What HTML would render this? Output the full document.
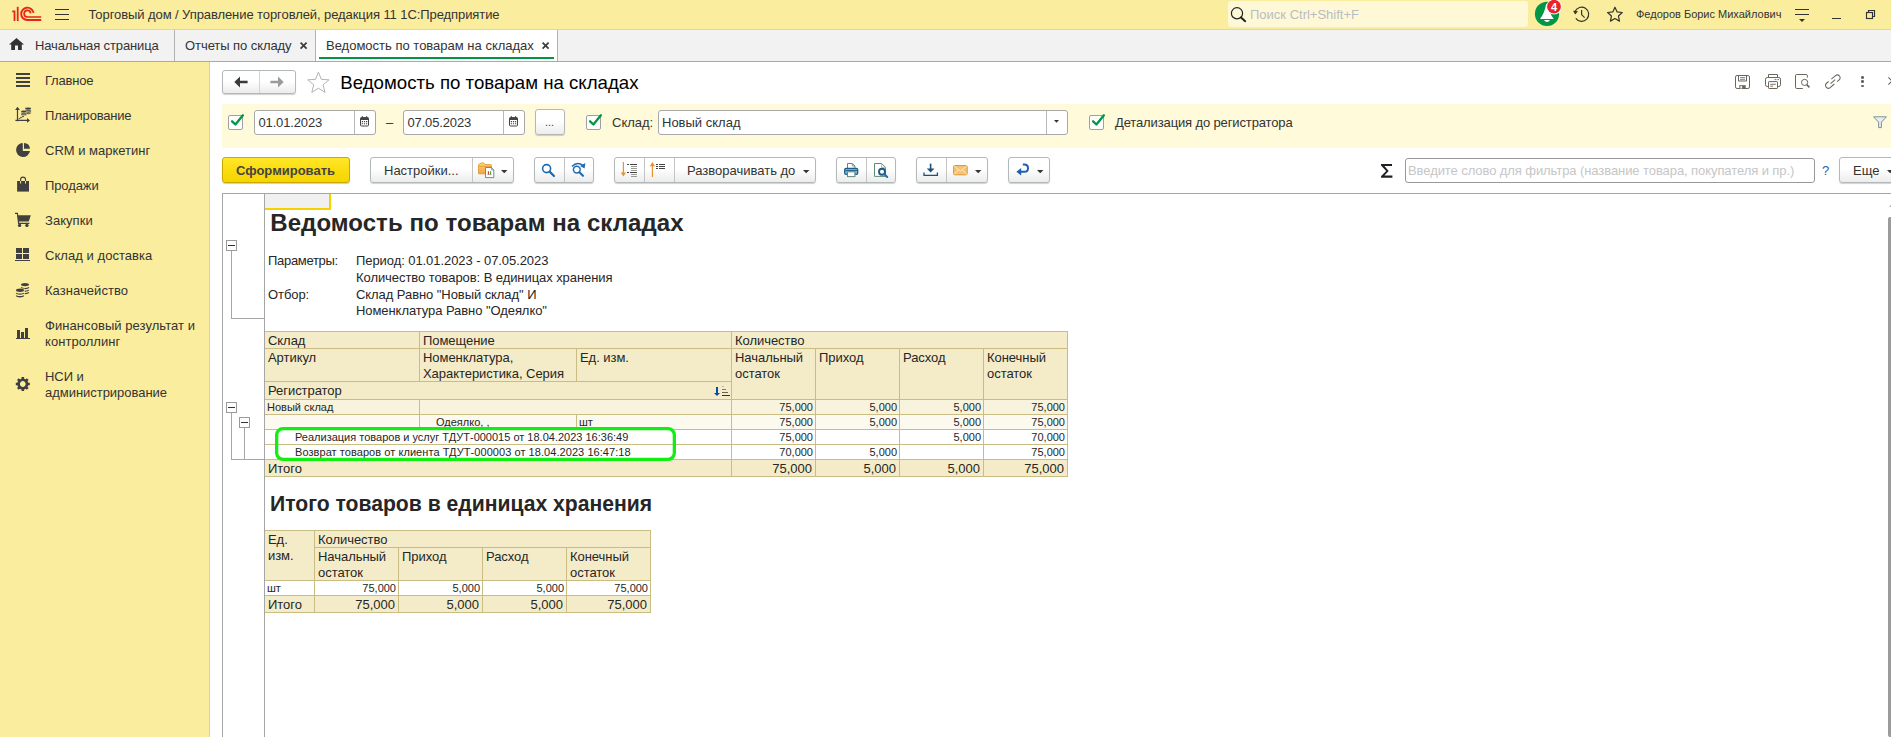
<!DOCTYPE html>
<html lang="ru">
<head>
<meta charset="utf-8">
<title>Ведомость по товарам на складах</title>
<style>
*{box-sizing:border-box;margin:0;padding:0}
html,body{width:1891px;height:737px;overflow:hidden;background:#fff}
body{font-family:"Liberation Sans",sans-serif;font-size:13px;color:#333;position:relative}
.abs{position:absolute}
.t{position:absolute;white-space:nowrap;line-height:1}
#topbar{left:0;top:0;width:1891px;height:30px;background:#fbed9e;border-bottom:1px solid #e6d88a}
#tabbar{left:0;top:30px;width:1891px;height:32px;background:#f2f2f2;border-bottom:1px solid #a9a9a9}
#sidebar{left:0;top:62px;width:210px;height:675px;background:#fbed9e;border-right:1px solid #ddd193}
.tabsep{position:absolute;top:30px;width:1px;height:31px;background:#b2b2b2}
.side{position:absolute;left:45px;font-size:13px;color:#333;line-height:16px;white-space:nowrap;letter-spacing:-0.15px}
.btn{position:absolute;border:1px solid #b3b9b9;border-radius:3px;background:linear-gradient(#ffffff 0%,#ffffff 45%,#ececec 100%);box-shadow:0 1px 1px rgba(0,0,0,.18)}
.inp{position:absolute;border:1px solid #a8a8a8;border-radius:3px;background:#fff}
.cb{position:absolute;width:15px;height:15px;border:1px solid #a0a0a0;border-radius:2px;background:#fff}
svg{position:absolute;overflow:visible}
</style>
</head>
<body>
<!-- TOP BAR -->
<div id="topbar" class="abs"></div>
<div id="tabbar" class="abs"></div>
<div id="sidebar" class="abs"></div>


<!-- 1C logo -->
<svg style="left:12px;top:6px" width="30" height="16" viewBox="0 0 30 16">
 <g fill="none" stroke="#e8231a">
  <path d="M0.2 5.4 L2.5 5.4 L2.5 15.1" stroke-width="1.8"/>
  <path d="M5.7 0.8 L5.7 15.1" stroke-width="1.8"/>
  <path d="M21.5 6.9 A6.2 6.2 0 1 0 15.3 14.05 L29.2 14.05" stroke-width="1.9"/>
  <path d="M18.7 7.3 A3.3 3.3 0 1 0 15.3 11 L29.2 11" stroke-width="1.7"/>
 </g>
</svg>
<!-- hamburger -->
<div class="abs" style="left:55px;top:9px;width:14px;height:1.4px;background:#333"></div>
<div class="abs" style="left:55px;top:14px;width:14px;height:1.4px;background:#333"></div>
<div class="abs" style="left:55px;top:19px;width:14px;height:1.4px;background:#333"></div>
<div class="t" style="left:88.5px;top:8px;font-size:13px;color:#333;letter-spacing:-0.08px">Торговый дом / Управление торговлей, редакция 11 1С:Предприятие</div>
<!-- search -->
<div class="abs" style="left:1228px;top:1px;width:300px;height:26px;background:#fef8d6;border-radius:3px"></div>
<svg style="left:1229px;top:5px" width="18" height="18" viewBox="0 0 18 18"><circle cx="8" cy="8.3" r="5.6" fill="none" stroke="#222" stroke-width="1.2"/><path d="M12 12.5 L16.2 16.2" stroke="#222" stroke-width="2" stroke-linecap="round"/></svg>
<div class="t" style="left:1250px;top:8px;font-size:13px;color:#b9bdc2">Поиск Ctrl+Shift+F</div>
<!-- bell -->
<svg style="left:1533px;top:0px" width="30" height="28" viewBox="0 0 30 28">
 <circle cx="14" cy="13.9" r="12.1" fill="#009646"/>
 <path d="M13.2 4 C12 9.5 10.6 14.6 7 18.9 L20.8 18.9 C17.2 14.6 15.8 9.5 14.6 4 Z" fill="#fff"/>
 <path d="M10.9 20.1 L17.1 20.1 Q14 23.8 10.9 20.1 Z" fill="#fff"/>
 <circle cx="21" cy="6.7" r="7.7" fill="#fff"/>
 <circle cx="21" cy="6.7" r="6.9" fill="#e8222a"/>
 <text x="21" y="11" text-anchor="middle" font-family="Liberation Sans" font-weight="bold" font-size="11" fill="#fff">4</text>
</svg>
<!-- history -->
<svg style="left:1572px;top:5px" width="20" height="20" viewBox="0 0 20 20">
 <path d="M3 6.6 A7.1 7.1 0 1 1 3.8 13.4" fill="none" stroke="#333" stroke-width="1.2"/>
 <path d="M1 5.8 L6 6.2 L3.2 9.6 Z" fill="#333"/>
 <path d="M9.6 5 L9.6 9.6 L12.6 12.6" fill="none" stroke="#333" stroke-width="1.2"/>
</svg>
<!-- star -->
<svg style="left:1606px;top:6px" width="18" height="17" viewBox="0 0 18 17">
 <path d="M8.95 1.20 L11.12 5.91 L16.27 6.52 L12.47 10.04 L13.48 15.13 L8.95 12.60 L4.42 15.13 L5.43 10.04 L1.63 6.52 L6.78 5.91 Z" fill="none" stroke="#333" stroke-width="1.2" stroke-linejoin="round"/>
</svg>
<div class="t" style="left:1636px;top:9px;font-size:11px;color:#333">Федоров Борис Михайлович</div>
<!-- menu lines -->
<div class="abs" style="left:1795px;top:8.8px;width:14px;height:1.3px;background:#333"></div>
<div class="abs" style="left:1795px;top:13.9px;width:14px;height:1.3px;background:#333"></div>
<svg style="left:1799px;top:19px" width="7" height="4" viewBox="0 0 7 4"><path d="M0 0 L6 0 L3 3 Z" fill="#333"/></svg>
<!-- minimize -->
<div class="abs" style="left:1832px;top:17.8px;width:9px;height:1.3px;background:#333"></div>
<!-- restore -->
<svg style="left:1865px;top:9px" width="11" height="11" viewBox="0 0 11 11">
 <path d="M3.5 3.5 L3.5 1.5 L9.5 1.5 L9.5 7.5 L7.5 7.5" fill="none" stroke="#333" stroke-width="1.15"/>
 <rect x="1.5" y="3.5" width="6" height="6" fill="none" stroke="#333" stroke-width="1.15"/>
</svg>

<!-- tabs -->
<div class="abs" style="left:316px;top:30px;width:241px;height:31px;background:#fff"></div>
<div class="tabsep" style="left:174px"></div>
<div class="tabsep" style="left:315px"></div>
<div class="tabsep" style="left:557px"></div>
<div class="abs" style="left:319px;top:57px;width:235px;height:2px;background:#009646"></div>
<svg style="left:9px;top:38px" width="15" height="12" viewBox="0 0 15 12"><path d="M7.5 0 L15 6.6 L12.8 6.6 L12.8 12 L9 12 L9 7.6 L6 7.6 L6 12 L2.2 12 L2.2 6.6 L0 6.6 Z" fill="#333"/></svg>
<div class="t" style="left:35px;top:39px;font-size:13px;color:#333;letter-spacing:-0.12px">Начальная страница</div>
<div class="t" style="left:185px;top:39px;font-size:13px;color:#333;letter-spacing:-0.07px">Отчеты по складу</div>
<svg style="left:300px;top:42px" width="8" height="8" viewBox="0 0 8 8"><path d="M0.6 0.6 L6.6 6.6 M6.6 0.6 L0.6 6.6" stroke="#3c3c3c" stroke-width="1.7"/></svg>
<div class="t" style="left:326px;top:39px;font-size:13px;color:#333">Ведомость по товарам на складах</div>
<svg style="left:542px;top:42px" width="8" height="8" viewBox="0 0 8 8"><path d="M0.6 0.6 L6.6 6.6 M6.6 0.6 L0.6 6.6" stroke="#3c3c3c" stroke-width="1.7"/></svg>


<!-- sidebar items -->
<div class="side" style="top:73px;letter-spacing:-0.2px">Главное</div>
<div class="side" style="top:108px;letter-spacing:-0.2px">Планирование</div>
<div class="side" style="top:143px;letter-spacing:0px">CRM и маркетинг</div>
<div class="side" style="top:178px;letter-spacing:-0.1px">Продажи</div>
<div class="side" style="top:213px;letter-spacing:0.05px">Закупки</div>
<div class="side" style="top:248px;letter-spacing:0.05px">Склад и доставка</div>
<div class="side" style="top:283px;letter-spacing:0.05px">Казначейство</div>
<div class="side" style="top:318px;letter-spacing:0.05px">Финансовый результат и<br>контроллинг</div>
<div class="side" style="top:369px;letter-spacing:-0.03px">НСИ и<br>администрирование</div>
<!-- icon: main -->
<div class="abs" style="left:16px;top:73px;width:14px;height:2px;background:#404040"></div>
<div class="abs" style="left:16px;top:77px;width:14px;height:2px;background:#404040"></div>
<div class="abs" style="left:16px;top:81px;width:14px;height:2px;background:#404040"></div>
<div class="abs" style="left:16px;top:85px;width:14px;height:2px;background:#404040"></div>
<!-- icon: planning -->
<svg style="left:14px;top:106px" width="18" height="19" viewBox="0 0 18 19">
 <path d="M3.5 2 L3.5 15.2 M1.4 14.4 L14 14.4" fill="none" stroke="#404040" stroke-width="1.2"/>
 <path d="M3.5 0.8 L1.1 3.9 L5.9 3.9 Z M16 14.4 L13 12 L13 16.8 Z" fill="#404040"/>
 <path d="M4.6 12.7 L5.8 12.7 L6.2 11.7 L7.6 11.7 L8 10.7 L10 10.5" fill="none" stroke="#404040" stroke-width="0.9"/>
 <g fill="#404040" stroke="#fbed9e" stroke-width="0.5">
 <ellipse cx="14.1" cy="7" rx="3.1" ry="1.3"/><ellipse cx="14.1" cy="5.6" rx="3.1" ry="1.3"/><ellipse cx="14.1" cy="4.2" rx="3.1" ry="1.3"/><ellipse cx="14.1" cy="2.6" rx="3.1" ry="1.4"/>
 <ellipse cx="9.8" cy="8.4" rx="2.9" ry="1.2"/><ellipse cx="9.8" cy="7" rx="2.9" ry="1.2"/><ellipse cx="9.8" cy="5.5" rx="2.9" ry="1.3"/>
 </g>
</svg>
<!-- icon: crm pie -->
<svg style="left:15px;top:142px" width="17" height="17" viewBox="0 0 17 17">
 <path d="M7.8 1 A7 7 0 1 0 15 9 L7.8 9 Z" fill="#404040"/>
 <path d="M9 1 A6.4 6.4 0 0 1 15 6.7 L9 6.7 Z" fill="#404040"/>
</svg>
<!-- icon: sales bag -->
<svg style="left:16px;top:176px" width="14" height="18" viewBox="0 0 14 18">
 <path d="M1.1 5 L13 5 L13 15.6 L1.1 15.6 Z" fill="#404040"/>
 <path d="M4.6 5 L4.6 3.6 A2.45 2.45 0 0 1 9.5 3.6 L9.5 5" fill="none" stroke="#404040" stroke-width="1.1"/>
 <path d="M4.6 5 L4.6 7.6 M9.5 5 L9.5 7.6" fill="none" stroke="#f3e598" stroke-width="1"/>
</svg>
<!-- icon: cart -->
<svg style="left:14px;top:212px" width="18" height="17" viewBox="0 0 18 17">
 <path d="M1 1.4 L3.4 1.4 L4.6 11.4 L15.4 11.4" fill="none" stroke="#404040" stroke-width="1.2"/>
 <path d="M3.6 3.2 L16.8 3.2 L14.8 9.6 L4.4 9.6 Z" fill="#404040"/>
 <circle cx="5.6" cy="13.4" r="1.7" fill="#404040"/><circle cx="12.9" cy="13.4" r="1.7" fill="#404040"/>
</svg>
<!-- icon: warehouse -->
<div class="abs" style="left:16px;top:248px;width:6px;height:5px;background:#404040"></div>
<div class="abs" style="left:23px;top:248px;width:6px;height:5px;background:#404040"></div>
<div class="abs" style="left:16px;top:254px;width:6px;height:5px;background:#404040"></div>
<div class="abs" style="left:23px;top:254px;width:6px;height:5px;background:#404040"></div>
<div class="abs" style="left:15px;top:260px;width:15px;height:1.4px;background:#404040"></div>
<!-- icon: treasury coins -->
<svg style="left:14px;top:280px" width="18" height="19" viewBox="0 0 18 19">
 <g fill="none" stroke="#404040" stroke-width="1.3">
  <path d="M7.2 7.4 A3.9 1.5 0 0 0 14.8 7.4"/><path d="M7.2 10 A3.9 1.5 0 0 0 14.8 10"/><path d="M7.2 12.4 A3.9 1.5 0 0 0 14.8 12.4"/>
 </g>
 <ellipse cx="11" cy="4.6" rx="4" ry="1.7" fill="#404040"/>
 <rect x="1.4" y="8.6" width="9.3" height="9" fill="#fbed9e"/>
 <g fill="none" stroke="#404040" stroke-width="1.3">
  <path d="M2.2 13 A3.9 1.5 0 0 0 9.8 13"/><path d="M2.2 15.6 A3.9 1.5 0 0 0 9.8 15.6"/>
 </g>
 <ellipse cx="6" cy="10.2" rx="4" ry="1.7" fill="#404040"/>
</svg>
<!-- icon: finance bars -->
<div class="abs" style="left:17px;top:330px;width:3px;height:8px;background:#404040"></div>
<div class="abs" style="left:21px;top:332px;width:3px;height:6px;background:#404040"></div>
<div class="abs" style="left:25px;top:328px;width:3px;height:10px;background:#404040"></div>
<div class="abs" style="left:16px;top:338px;width:14px;height:1.3px;background:#404040"></div>
<!-- icon: gear -->
<svg style="left:15px;top:376px" width="16" height="16" viewBox="0 0 16 16">
 <g transform="translate(7.8 8)">
  <circle r="4.2" fill="none" stroke="#404040" stroke-width="2.6"/>
  <g fill="#404040"><rect x="-1.3" y="-7" width="2.6" height="3"/><rect x="-1.3" y="-7" width="2.6" height="3" transform="rotate(45)"/><rect x="-1.3" y="-7" width="2.6" height="3" transform="rotate(90)"/><rect x="-1.3" y="-7" width="2.6" height="3" transform="rotate(135)"/><rect x="-1.3" y="-7" width="2.6" height="3" transform="rotate(180)"/><rect x="-1.3" y="-7" width="2.6" height="3" transform="rotate(225)"/><rect x="-1.3" y="-7" width="2.6" height="3" transform="rotate(270)"/><rect x="-1.3" y="-7" width="2.6" height="3" transform="rotate(315)"/></g>
 </g>
</svg>

<!-- form header -->
<div class="btn" style="left:222px;top:70px;width:74px;height:24px"></div>
<div class="abs" style="left:259px;top:71px;width:1px;height:22px;background:#d4d4d4"></div>
<svg style="left:234px;top:76px" width="14" height="12" viewBox="0 0 14 12"><path d="M0.3 6 L6 0.6 L6 4.7 L13.6 4.7 L13.6 7.3 L6 7.3 L6 11.4 Z" fill="#3a3a3a"/></svg>
<svg style="left:270px;top:76px" width="14" height="12" viewBox="0 0 14 12"><path d="M13.7 6 L8 0.6 L8 4.7 L0.4 4.7 L0.4 7.3 L8 7.3 L8 11.4 Z" fill="#9b9b9b"/></svg>
<svg style="left:307px;top:71px" width="23" height="23" viewBox="0 0 23 23"><path d="M11.40 1.10 L14.28 8.34 L22.05 8.84 L16.06 13.81 L17.98 21.36 L11.40 17.20 L4.82 21.36 L6.74 13.81 L0.75 8.84 L8.52 8.34 Z" fill="#fff" stroke="#b3b3b3" stroke-width="1" stroke-linejoin="round"/></svg>
<div class="t" style="left:340.3px;top:74px;font-size:18.67px;color:#000">Ведомость по товарам на складах</div>
<!-- header right icons -->
<svg style="left:1735px;top:75px" width="15" height="14" viewBox="0 0 15 14"><g fill="none" stroke="#6b655b" stroke-width="1"><rect x="0.5" y="0.5" width="14" height="13" rx="1.6"/><path d="M3.5 0.5 L3.5 6 L11.5 6 L11.5 0.5"/><path d="M5 2.6 L10 2.6 M5 4.3 L10 4.3" stroke-width="0.8"/></g><path d="M4.3 13.5 L4.3 10.2 L10.7 10.2 L10.7 13.5 Z" fill="#6b655b"/><rect x="5.3" y="11.2" width="1.8" height="2.3" fill="#fff"/></svg>
<svg style="left:1765px;top:74px" width="16" height="15" viewBox="0 0 16 15"><g fill="none" stroke="#6b655b" stroke-width="1"><path d="M3.5 3.5 L3.5 0.5 L12.5 0.5 L12.5 3.5"/><path d="M3.5 12.5 L2.2 12.5 Q0.5 12.5 0.5 10.8 L0.5 5.2 Q0.5 3.5 2.2 3.5 L13.8 3.5 Q15.5 3.5 15.5 5.2 L15.5 10.8 Q15.5 12.5 13.8 12.5 L12.5 12.5"/><rect x="3.5" y="7.6" width="9" height="6.9" rx="0.6" fill="#fff"/><path d="M5.2 10.3 L10.8 10.3 M5.2 12.2 L8 12.2" stroke-width="0.9"/><path d="M9.6 5.6 L11.4 5.6 M12.4 5.6 L14 5.6" stroke-width="0.9"/></g></svg>
<svg style="left:1795px;top:74px" width="16" height="15" viewBox="0 0 16 15"><g fill="none" stroke="#6b655b" stroke-width="1"><path d="M12.4 3.6 L12.4 1.8 Q12.4 0.5 11.1 0.5 L1.8 0.5 Q0.5 0.5 0.5 1.8 L0.5 13.2 Q0.5 14.5 1.8 14.5 L7.8 14.5"/><circle cx="9.6" cy="8.4" r="3.1"/><path d="M11.8 10.7 L14.4 13.3" stroke-width="1.7"/></g></svg>
<svg style="left:1824px;top:73px" width="18" height="18" viewBox="0 0 18 18"><g fill="none" stroke="#6b655b" stroke-width="1.05" transform="translate(8.85 8.6) rotate(-40)"><path d="M0.4 -2.8 L5.9 -2.8 A2.8 2.8 0 0 1 5.9 2.8 L3.2 2.8"/><path d="M-0.4 2.8 L-5.9 2.8 A2.8 2.8 0 0 1 -5.9 -2.8 L-3.2 -2.8"/><path d="M-3 0 L3 0"/></g></svg>
<div class="abs" style="left:1861.3px;top:75.9px;width:2.7px;height:2.7px;border-radius:50%;background:#6b655b"></div>
<div class="abs" style="left:1861.3px;top:80.2px;width:2.7px;height:2.7px;border-radius:50%;background:#6b655b"></div>
<div class="abs" style="left:1861.3px;top:84.6px;width:2.7px;height:2.7px;border-radius:50%;background:#6b655b"></div>
<svg style="left:1888px;top:77px" width="8" height="8" viewBox="0 0 8 8"><path d="M0.4 0.4 L7.6 7.6 M7.6 0.4 L0.4 7.6" stroke="#6b655b" stroke-width="1.1"/></svg>

<!-- filter band -->
<div class="abs" style="left:222px;top:104px;width:1669px;height:44px;background:#fffad9"></div>
<div class="cb" style="left:228px;top:115px"></div>
<svg style="left:230px;top:113px" width="15" height="15" viewBox="0 0 15 15"><path d="M2.1 8.3 L5.4 11.5 L12.9 2.3" fill="none" stroke="#009646" stroke-width="2.3" stroke-linecap="round" stroke-linejoin="round"/></svg>
<div class="inp" style="left:254px;top:110px;width:122px;height:25px"></div>
<div class="abs" style="left:354px;top:111px;width:1px;height:23px;background:#b8b8b8"></div>
<div class="t" style="left:258.5px;top:116px;font-size:13px;color:#333;letter-spacing:-0.15px">01.01.2023</div>
<div class="inp" style="left:403px;top:110px;width:122px;height:25px"></div>
<div class="abs" style="left:503px;top:111px;width:1px;height:23px;background:#b8b8b8"></div>
<div class="t" style="left:407.5px;top:116px;font-size:13px;color:#333;letter-spacing:-0.15px">07.05.2023</div>
<div class="t" style="left:386px;top:116px;font-size:13px;color:#333">–</div>
<div class="btn" style="left:535px;top:109px;width:30px;height:26px"></div>
<div class="t" style="left:545px;top:117px;font-size:11px;color:#444">...</div>
<div class="cb" style="left:586px;top:115px"></div>
<svg style="left:588px;top:113px" width="15" height="15" viewBox="0 0 15 15"><path d="M2.1 8.3 L5.4 11.5 L12.9 2.3" fill="none" stroke="#009646" stroke-width="2.3" stroke-linecap="round" stroke-linejoin="round"/></svg>
<div class="t" style="left:612px;top:116px;font-size:13px;color:#333">Склад:</div>
<div class="inp" style="left:658px;top:110px;width:410px;height:25px"></div>
<div class="abs" style="left:1046px;top:111px;width:1px;height:23px;background:#b8b8b8"></div>
<div class="t" style="left:662px;top:116px;font-size:13px;color:#333">Новый склад</div>
<svg style="left:1054.3px;top:120.3px" width="6" height="3" viewBox="0 0 6 3"><path d="M0 0 L5 0 L2.5 2.7 Z" fill="#333"/></svg>
<div class="cb" style="left:1089px;top:115px"></div>
<svg style="left:1091px;top:113px" width="15" height="15" viewBox="0 0 15 15"><path d="M2.1 8.3 L5.4 11.5 L12.9 2.3" fill="none" stroke="#009646" stroke-width="2.3" stroke-linecap="round" stroke-linejoin="round"/></svg>
<div class="t" style="left:1115px;top:116px;font-size:13px;color:#333;letter-spacing:-0.13px">Детализация до регистратора</div>
<svg style="left:1873px;top:116px" width="14" height="13" viewBox="0 0 14 13"><path d="M0.6 0.8 L13.4 0.8 L8.4 6.2 L8.4 11.6 L5.6 11.6 L5.6 6.2 Z" fill="#e8eef0" stroke="#7c9098" stroke-width="1"/></svg>
<!-- calendar icons -->
<svg class="cal" style="left:360px;top:116px" width="9" height="11" viewBox="0 0 9 11"><rect x="0.5" y="1.6" width="8" height="8.4" rx="1" fill="#fff" stroke="#444" stroke-width="1"/><rect x="0.5" y="1.6" width="8" height="2.4" fill="#444"/><path d="M2.4 0.2 L2.4 2.4 M6.6 0.2 L6.6 2.4" stroke="#444" stroke-width="1.2"/><path d="M1.8 5.6 L3 5.6 M3.9 5.6 L5.1 5.6 M6 5.6 L7.2 5.6 M1.8 7.8 L3 7.8 M3.9 7.8 L5.1 7.8 M6 7.8 L7.2 7.8" stroke="#444" stroke-width="1.1"/></svg>
<svg class="cal" style="left:509px;top:116px" width="9" height="11" viewBox="0 0 9 11"><rect x="0.5" y="1.6" width="8" height="8.4" rx="1" fill="#fff" stroke="#444" stroke-width="1"/><rect x="0.5" y="1.6" width="8" height="2.4" fill="#444"/><path d="M2.4 0.2 L2.4 2.4 M6.6 0.2 L6.6 2.4" stroke="#444" stroke-width="1.2"/><path d="M1.8 5.6 L3 5.6 M3.9 5.6 L5.1 5.6 M6 5.6 L7.2 5.6 M1.8 7.8 L3 7.8 M3.9 7.8 L5.1 7.8 M6 7.8 L7.2 7.8" stroke="#444" stroke-width="1.1"/></svg>


<!-- toolbar -->
<div class="abs" style="left:222px;top:157px;width:128px;height:26px;border:1px solid #c9a800;border-radius:3px;background:linear-gradient(#ffe82a 0%,#fbdc0e 50%,#f5d400 100%);box-shadow:0 1px 1px rgba(0,0,0,.2)"></div>
<div class="t" style="left:236px;top:164px;font-size:13px;font-weight:bold;color:#444">Сформировать</div>
<div class="btn" style="left:370px;top:157px;width:144px;height:26px"></div>
<div class="abs" style="left:472px;top:158px;width:1px;height:24px;background:#c4c4c4"></div>
<div class="t" style="left:384px;top:164px;font-size:13px;color:#333">Настройки...</div>
<svg style="left:478px;top:161px" width="18" height="18" viewBox="0 0 18 18">
 <defs><linearGradient id="fg" x1="0" y1="0" x2="0" y2="1"><stop offset="0" stop-color="#fbd676"/><stop offset="1" stop-color="#f2a440"/></linearGradient></defs>
 <path d="M0.5 4.2 Q0.5 3.2 1.4 3 L3.4 2 Q4.4 1.6 5.4 2 L7.6 3.6 L12.6 3.6 Q13.6 3.6 13.6 4.6 L13.6 12.8 L0.5 12.8 Z" fill="url(#fg)" stroke="#dc922f" stroke-width="0.8"/>
 <path d="M1 5.4 L13 5.4" stroke="#e29a35" stroke-width="0.8"/>
 <path d="M7.5 6.5 L13.4 6.5 L15.8 8.9 L15.8 16.6 L7.5 16.6 Z" fill="#fff" stroke="#66837c" stroke-width="0.9"/>
 <path d="M13.4 6.5 L13.4 8.9 L15.8 8.9" fill="none" stroke="#66837c" stroke-width="0.7"/>
 <path d="M10.4 13.4 L10.4 10.2" stroke="#e22" stroke-width="1.1"/><path d="M12.5 13.4 L12.5 10.2" stroke="#2b2" stroke-width="1.1"/><path d="M9.4 13.6 L13.6 13.6" stroke="#777" stroke-width="0.6"/>
</svg>
<svg style="left:501px;top:170px" width="7" height="4" viewBox="0 0 7 4"><path d="M0 0 L6.4 0 L3.2 3.2 Z" fill="#333"/></svg>
<div class="btn" style="left:534px;top:157px;width:60px;height:26px"></div>
<div class="abs" style="left:564px;top:158px;width:1px;height:24px;background:#c4c4c4"></div>
<svg style="left:541px;top:163px" width="15" height="15" viewBox="0 0 15 15"><circle cx="5.6" cy="5.6" r="4" fill="none" stroke="#1e6cb3" stroke-width="1.6"/><path d="M8.6 8.6 L13 13" stroke="#1e6cb3" stroke-width="2.2" stroke-linecap="round"/></svg>
<svg style="left:570px;top:161px" width="17" height="17" viewBox="0 0 17 17"><circle cx="6.8" cy="8.6" r="3.4" fill="none" stroke="#1e6cb3" stroke-width="1.5"/><path d="M9.4 11.2 L13 14.8" stroke="#1e6cb3" stroke-width="2.1" stroke-linecap="round"/><path d="M2 5.4 Q7 0 13 4.4" fill="none" stroke="#1e6cb3" stroke-width="1.5"/><path d="M15.4 2 L14.6 7.4 L10 5 Z" fill="#1e6cb3"/></svg>
<div class="btn" style="left:614px;top:157px;width:202px;height:26px"></div>
<div class="abs" style="left:644px;top:158px;width:1px;height:24px;background:#c4c4c4"></div>
<div class="abs" style="left:674px;top:158px;width:1px;height:24px;background:#c4c4c4"></div>
<svg style="left:620px;top:161px" width="8" height="17" viewBox="0 0 8 17"><path d="M3.4 1 L3.4 13" stroke="#e8912d" stroke-width="1.2"/><path d="M0.8 11.4 L3.4 15.6 L6 11.4 Z" fill="#e8912d"/></svg>
<div class="abs" style="left:627px;top:164px;width:2px;height:1px;background:#444"></div>
<div class="abs" style="left:630px;top:164px;width:7px;height:1px;background:#444"></div>
<div class="abs" style="left:631px;top:166px;width:6px;height:1px;background:#9a9a9a"></div>
<div class="abs" style="left:631px;top:168px;width:6px;height:1px;background:#9a9a9a"></div>
<div class="abs" style="left:631px;top:170px;width:6px;height:1px;background:#9a9a9a"></div>
<div class="abs" style="left:627px;top:172px;width:2px;height:1px;background:#444"></div>
<div class="abs" style="left:630px;top:172px;width:7px;height:1px;background:#444"></div>
<div class="abs" style="left:631px;top:174px;width:6px;height:1px;background:#9a9a9a"></div>
<div class="abs" style="left:631px;top:176px;width:6px;height:1px;background:#9a9a9a"></div>
<svg style="left:649px;top:161px" width="8" height="17" viewBox="0 0 8 17"><path d="M3.4 3 L3.4 16" stroke="#e8912d" stroke-width="1.2"/><path d="M0.8 5.2 L3.4 1 L6 5.2 Z" fill="#e8912d"/></svg>
<div class="abs" style="left:656px;top:164px;width:2px;height:1px;background:#444"></div>
<div class="abs" style="left:659px;top:164px;width:6px;height:1px;background:#444"></div>
<div class="abs" style="left:656px;top:166px;width:2px;height:1px;background:#444"></div>
<div class="abs" style="left:659px;top:166px;width:6px;height:1px;background:#444"></div>
<div class="abs" style="left:656px;top:168px;width:2px;height:1px;background:#444"></div>
<div class="abs" style="left:659px;top:168px;width:6px;height:1px;background:#444"></div>
<div class="t" style="left:687px;top:164px;font-size:13px;color:#333">Разворачивать до</div>
<svg style="left:803px;top:170px" width="7" height="4" viewBox="0 0 7 4"><path d="M0 0 L6.4 0 L3.2 3.2 Z" fill="#333"/></svg>
<div class="btn" style="left:836px;top:157px;width:60px;height:26px"></div>
<div class="abs" style="left:866px;top:158px;width:1px;height:24px;background:#c4c4c4"></div>
<svg style="left:844px;top:163px" width="15" height="15" viewBox="0 0 15 15"><path d="M3.5 5.4 L3.5 0.5 L8.4 0.5 L10.9 3 L10.9 5.4" fill="#fff" stroke="#5f8b74" stroke-width="1"/><path d="M8.4 0.5 L8.4 3 L10.9 3" fill="none" stroke="#5f8b74" stroke-width="0.8"/><rect x="0.7" y="5.4" width="13" height="6" rx="1.4" fill="#7fb7d2" stroke="#1d5f86" stroke-width="1.3"/><path d="M1.4 7.4 L13 7.4" stroke="#1d5f86" stroke-width="1"/><rect x="3.5" y="8.8" width="7.4" height="4.8" fill="#fff" stroke="#5f8b74" stroke-width="1"/></svg>
<svg style="left:874px;top:163px" width="16" height="16" viewBox="0 0 16 16"><path d="M0.5 0.5 L7.6 0.5 L11.4 4.3 L11.4 13.4 L0.5 13.4 Z" fill="#fff" stroke="#5f8b74" stroke-width="1"/><path d="M7.6 0.5 L7.6 4.3 L11.4 4.3" fill="none" stroke="#9ab0a6" stroke-width="0.8"/><circle cx="8" cy="8.8" r="3" fill="#fff" stroke="#1d5b80" stroke-width="1.9"/><path d="M10.4 11.2 L13.2 14" stroke="#1e6cb3" stroke-width="2" stroke-linecap="round"/></svg>
<div class="btn" style="left:916px;top:157px;width:72px;height:26px"></div>
<div class="abs" style="left:946px;top:158px;width:1px;height:24px;background:#c4c4c4"></div>
<svg style="left:923px;top:163px" width="16" height="14" viewBox="0 0 16 14"><path d="M7.6 0.6 L7.6 7" stroke="#1d4f7c" stroke-width="1.6"/><path d="M3.8 5.4 L7.6 9.6 L11.4 5.4 Z" fill="#1d4f7c"/><path d="M1 9.6 L1 12.4 L14.4 12.4 L14.4 9.6" fill="none" stroke="#1d4f7c" stroke-width="1.3"/></svg>
<svg style="left:953px;top:165px" width="15" height="11" viewBox="0 0 15 11"><rect x="0.6" y="0.6" width="13.6" height="9.2" rx="1" fill="#f7c273" stroke="#dc9630" stroke-width="1"/><path d="M1 1 L7.4 6 L13.8 1 M1 9.4 L5.6 4.8 M13.8 9.4 L9.2 4.8" fill="none" stroke="#fdebc8" stroke-width="1"/></svg>
<svg style="left:975px;top:170px" width="7" height="4" viewBox="0 0 7 4"><path d="M0 0 L6.4 0 L3.2 3.2 Z" fill="#333"/></svg>
<div class="btn" style="left:1008px;top:157px;width:42px;height:26px"></div>
<svg style="left:1016px;top:163px" width="14" height="13" viewBox="0 0 14 13"><path d="M3 8.8 L8.4 8.8 Q12 8.8 12 5.2 Q12 1.6 8.4 1.6 L6.8 1.6" fill="none" stroke="#1e5fae" stroke-width="2"/><path d="M0.4 8.8 L5.2 5 L5.2 12.4 Z" fill="#1e5fae"/></svg>
<svg style="left:1037px;top:170px" width="7" height="4" viewBox="0 0 7 4"><path d="M0 0 L6.4 0 L3.2 3.2 Z" fill="#333"/></svg>
<svg style="left:1381px;top:164px" width="12" height="14" viewBox="0 0 12 14"><path d="M11 2.1 L11 0 L0 0 L0 1.6 L5.2 6.9 L0 12.2 L0 13.8 L11.4 13.8 L11.4 11.6 L3.4 11.6 L7.7 6.9 L3.4 2.1 Z" fill="#1f1f26"/></svg>
<div class="inp" style="left:1405px;top:158px;width:410px;height:25px;border-color:#999"></div>
<div class="t" style="left:1408px;top:164px;font-size:13px;color:#c6c6c6;letter-spacing:-0.08px">Введите слово для фильтра (название товара, покупателя и пр.)</div>
<div class="t" style="left:1822px;top:164px;font-size:13px;color:#1a5fb4">?</div>
<div class="btn" style="left:1839px;top:157px;width:60px;height:26px"></div>
<div class="t" style="left:1853px;top:164px;font-size:13px;color:#333">Еще</div>
<svg style="left:1887px;top:170px" width="7" height="4" viewBox="0 0 7 4"><path d="M0 0 L6.4 0 L3.2 3.2 Z" fill="#333"/></svg>

<!--REPORT-START-->
<!-- report frame -->
<div class="abs" style="left:222px;top:193px;width:1669px;height:1px;background:#a6a6a6"></div>
<div class="abs" style="left:222px;top:193px;width:1px;height:544px;background:#a6a6a6"></div>
<div class="abs" style="left:264px;top:194px;width:1px;height:543px;background:#a6a6a6"></div>
<div class="abs" style="left:1888px;top:217px;width:6px;height:520px;background:#9b9b9b;border-radius:2px"></div>
<svg style="left:1888.5px;top:204px" width="6" height="4" viewBox="0 0 6 4"><path d="M0 3 L2.6 0.2 L5.2 3 Z" fill="#b4b4b4"/></svg>
<div class="abs" style="left:265px;top:194px;width:64px;height:14px;background:#f0f0f0"></div>
<div class="abs" style="left:265px;top:208px;width:66px;height:2px;background:#f5d100"></div>
<div class="abs" style="left:329px;top:194px;width:2px;height:16px;background:#f5d100"></div>
<div class="t r" style="left:270.3px;top:211px;font-size:24px;font-weight:bold;color:#262626;letter-spacing:0.06px">Ведомость по товарам на складах</div>
<div class="abs" style="left:226px;top:240px;width:11px;height:11px;border:1px solid #9a9a9a;background:#fff"></div>
<div class="abs" style="left:228px;top:245px;width:7px;height:1px;background:#333"></div>
<div class="abs" style="left:231px;top:251px;width:1px;height:67px;background:#a6a6a6"></div>
<div class="abs" style="left:231px;top:318px;width:33px;height:1px;background:#a6a6a6"></div>
<div class="abs" style="left:226px;top:402px;width:11px;height:11px;border:1px solid #9a9a9a;background:#fff"></div>
<div class="abs" style="left:228px;top:407px;width:7px;height:1px;background:#333"></div>
<div class="abs" style="left:231px;top:413px;width:1px;height:46px;background:#a6a6a6"></div>
<div class="abs" style="left:231px;top:459px;width:33px;height:1px;background:#a6a6a6"></div>
<div class="abs" style="left:239px;top:417px;width:11px;height:11px;border:1px solid #9a9a9a;background:#fff"></div>
<div class="abs" style="left:241px;top:422px;width:7px;height:1px;background:#333"></div>
<div class="abs" style="left:244px;top:428px;width:1px;height:31px;background:#a6a6a6"></div>
<div class="t r" style="left:268px;top:254px;font-size:13px;letter-spacing:-0.3px;color:#262626">Параметры:</div>
<div class="t r" style="left:356px;top:254px;font-size:13px;letter-spacing:-0.07px;color:#262626">Период: 01.01.2023 - 07.05.2023</div>
<div class="t r" style="left:356px;top:271px;font-size:13px;letter-spacing:-0.07px;color:#262626">Количество товаров: В единицах хранения</div>
<div class="t r" style="left:268px;top:288px;font-size:13px;letter-spacing:-0.07px;color:#262626">Отбор:</div>
<div class="t r" style="left:356px;top:288px;font-size:13px;letter-spacing:-0.07px;color:#262626">Склад Равно "Новый склад" И</div>
<div class="t r" style="left:356px;top:304px;font-size:13px;letter-spacing:-0.07px;color:#262626">Номенклатура Равно "Одеялко"</div>
<div class="abs" style="left:265px;top:331px;width:803px;height:68px;background:#f4ecc8"></div>
<div class="abs" style="left:265px;top:400px;width:803px;height:14px;background:#f8f3dd"></div>
<div class="abs" style="left:265px;top:415px;width:803px;height:14px;background:#fcfaef"></div>
<div class="abs" style="left:265px;top:460px;width:803px;height:16px;background:#f4ecc8"></div>
<div class="abs" style="left:265px;top:331px;width:803px;height:1px;background:#c9bd84"></div>
<div class="abs" style="left:265px;top:348px;width:803px;height:1px;background:#c9bd84"></div>
<div class="abs" style="left:265px;top:399px;width:803px;height:1px;background:#c9bd84"></div>
<div class="abs" style="left:265px;top:414px;width:803px;height:1px;background:#c9bd84"></div>
<div class="abs" style="left:265px;top:429px;width:803px;height:1px;background:#c9bd84"></div>
<div class="abs" style="left:265px;top:444px;width:803px;height:1px;background:#c9bd84"></div>
<div class="abs" style="left:265px;top:459px;width:803px;height:1px;background:#c9bd84"></div>
<div class="abs" style="left:265px;top:476px;width:803px;height:1px;background:#c9bd84"></div>
<div class="abs" style="left:265px;top:381px;width:467px;height:1px;background:#c9bd84"></div>
<div class="abs" style="left:731px;top:331px;width:1px;height:146px;background:#c9bd84"></div>
<div class="abs" style="left:1067px;top:331px;width:1px;height:146px;background:#c9bd84"></div>
<div class="abs" style="left:815px;top:348px;width:1px;height:129px;background:#c9bd84"></div>
<div class="abs" style="left:899px;top:348px;width:1px;height:129px;background:#c9bd84"></div>
<div class="abs" style="left:983px;top:348px;width:1px;height:129px;background:#c9bd84"></div>
<div class="abs" style="left:419px;top:331px;width:1px;height:50px;background:#c9bd84"></div>
<div class="abs" style="left:419px;top:399px;width:1px;height:30px;background:#c9bd84"></div>
<div class="abs" style="left:576px;top:348px;width:1px;height:33px;background:#c9bd84"></div>
<div class="abs" style="left:576px;top:414px;width:1px;height:15px;background:#c9bd84"></div>
<div class="t r" style="left:268px;top:334px;font-size:13px;color:#262626;letter-spacing:-0.05px">Склад</div>
<div class="t r" style="left:423px;top:334px;font-size:13px;color:#262626;letter-spacing:-0.05px">Помещение</div>
<div class="t r" style="left:735px;top:334px;font-size:13px;color:#262626;letter-spacing:-0.05px">Количество</div>
<div class="t r" style="left:268px;top:351px;font-size:13px;color:#262626;letter-spacing:-0.05px">Артикул</div>
<div class="t r" style="left:423px;top:351px;font-size:13px;color:#262626;letter-spacing:-0.05px">Номенклатура,</div>
<div class="t r" style="left:423px;top:367px;font-size:13px;color:#262626;letter-spacing:-0.05px">Характеристика, Серия</div>
<div class="t r" style="left:580px;top:351px;font-size:13px;color:#262626;letter-spacing:-0.05px">Ед. изм.</div>
<div class="t r" style="left:735px;top:351px;font-size:13px;color:#262626;letter-spacing:-0.05px">Начальный</div>
<div class="t r" style="left:735px;top:367px;font-size:13px;color:#262626;letter-spacing:-0.05px">остаток</div>
<div class="t r" style="left:819px;top:351px;font-size:13px;color:#262626;letter-spacing:-0.05px">Приход</div>
<div class="t r" style="left:903px;top:351px;font-size:13px;color:#262626;letter-spacing:-0.05px">Расход</div>
<div class="t r" style="left:987px;top:351px;font-size:13px;color:#262626;letter-spacing:-0.05px">Конечный</div>
<div class="t r" style="left:987px;top:367px;font-size:13px;color:#262626;letter-spacing:-0.05px">остаток</div>
<div class="t r" style="left:268px;top:384px;font-size:13px;color:#262626;letter-spacing:-0.05px">Регистратор</div>
<div class="abs" style="left:716px;top:387px;width:2px;height:7px;background:#0a4aa8"></div>
<svg style="left:714px;top:393px" width="6" height="3" viewBox="0 0 6 3"><path d="M0 0 L6 0 L3 3 Z" fill="#0a4aa8"/></svg>
<div class="abs" style="left:722px;top:386px;width:2px;height:1px;background:#b9b9b0"></div>
<div class="abs" style="left:722px;top:389px;width:4px;height:1px;background:#5f8c8a"></div>
<div class="abs" style="left:722px;top:392px;width:6px;height:1px;background:#6b6058"></div>
<div class="abs" style="left:722px;top:395px;width:8px;height:1px;background:#333"></div>
<div class="t r" style="left:267px;top:402px;font-size:11px;color:#262626">Новый склад</div>
<div class="t r" style="left:436px;top:417px;font-size:11px;color:#262626">Одеялко, ,</div>
<div class="t r" style="left:579px;top:417px;font-size:11px;color:#262626">шт</div>
<div class="t r" style="left:295px;top:432px;font-size:11px;color:#262626">Реализация товаров и услуг ТДУТ-000015 от 18.04.2023 16:36:49</div>
<div class="t r" style="left:295px;top:447px;font-size:11px;color:#262626;letter-spacing:0.06px">Возврат товаров от клиента ТДУТ-000003 от 18.04.2023 16:47:18</div>
<div class="t r" style="left:268px;top:462px;font-size:13px;color:#262626;letter-spacing:-0.05px">Итого</div>
<div class="t r" style="right:1078px;top:402px;font-size:11px;color:#262626">75,000</div>
<div class="t r" style="right:994px;top:402px;font-size:11px;color:#262626">5,000</div>
<div class="t r" style="right:910px;top:402px;font-size:11px;color:#262626">5,000</div>
<div class="t r" style="right:826px;top:402px;font-size:11px;color:#262626">75,000</div>
<div class="t r" style="right:1078px;top:417px;font-size:11px;color:#262626">75,000</div>
<div class="t r" style="right:994px;top:417px;font-size:11px;color:#262626">5,000</div>
<div class="t r" style="right:910px;top:417px;font-size:11px;color:#262626">5,000</div>
<div class="t r" style="right:826px;top:417px;font-size:11px;color:#262626">75,000</div>
<div class="t r" style="right:1078px;top:432px;font-size:11px;color:#262626">75,000</div>
<div class="t r" style="right:910px;top:432px;font-size:11px;color:#262626">5,000</div>
<div class="t r" style="right:826px;top:432px;font-size:11px;color:#262626">70,000</div>
<div class="t r" style="right:1078px;top:447px;font-size:11px;color:#262626">70,000</div>
<div class="t r" style="right:994px;top:447px;font-size:11px;color:#262626">5,000</div>
<div class="t r" style="right:826px;top:447px;font-size:11px;color:#262626">75,000</div>
<div class="t r" style="right:1079px;top:462px;font-size:13px;color:#262626">75,000</div>
<div class="t r" style="right:995px;top:462px;font-size:13px;color:#262626">5,000</div>
<div class="t r" style="right:911px;top:462px;font-size:13px;color:#262626">5,000</div>
<div class="t r" style="right:827px;top:462px;font-size:13px;color:#262626">75,000</div>
<svg style="left:275px;top:427px" width="401" height="34" viewBox="0 0 401 34"><rect x="1.65" y="1.65" width="397.7" height="30.7" rx="6.3" fill="none" stroke="#12ee12" stroke-width="3.3"/></svg>
<div class="t r" style="left:270px;top:493px;font-size:21.15px;font-weight:bold;color:#262626">Итого товаров в единицах хранения</div>
<div class="abs" style="left:265px;top:530px;width:386px;height:50px;background:#f4ecc8"></div>
<div class="abs" style="left:265px;top:596px;width:386px;height:16px;background:#f4ecc8"></div>
<div class="abs" style="left:265px;top:530px;width:386px;height:1px;background:#c9bd84"></div>
<div class="abs" style="left:265px;top:580px;width:386px;height:1px;background:#c9bd84"></div>
<div class="abs" style="left:265px;top:595px;width:386px;height:1px;background:#c9bd84"></div>
<div class="abs" style="left:265px;top:612px;width:386px;height:1px;background:#c9bd84"></div>
<div class="abs" style="left:314px;top:547px;width:337px;height:1px;background:#c9bd84"></div>
<div class="abs" style="left:314px;top:530px;width:1px;height:83px;background:#c9bd84"></div>
<div class="abs" style="left:398px;top:547px;width:1px;height:66px;background:#c9bd84"></div>
<div class="abs" style="left:482px;top:547px;width:1px;height:66px;background:#c9bd84"></div>
<div class="abs" style="left:566px;top:547px;width:1px;height:66px;background:#c9bd84"></div>
<div class="abs" style="left:650px;top:530px;width:1px;height:83px;background:#c9bd84"></div>
<div class="t r" style="left:268px;top:533px;font-size:13px;color:#262626;letter-spacing:-0.05px">Ед.</div>
<div class="t r" style="left:268px;top:549px;font-size:13px;color:#262626;letter-spacing:-0.05px">изм.</div>
<div class="t r" style="left:318px;top:533px;font-size:13px;color:#262626;letter-spacing:-0.05px">Количество</div>
<div class="t r" style="left:318px;top:550px;font-size:13px;color:#262626;letter-spacing:-0.05px">Начальный</div>
<div class="t r" style="left:318px;top:566px;font-size:13px;color:#262626;letter-spacing:-0.05px">остаток</div>
<div class="t r" style="left:402px;top:550px;font-size:13px;color:#262626;letter-spacing:-0.05px">Приход</div>
<div class="t r" style="left:486px;top:550px;font-size:13px;color:#262626;letter-spacing:-0.05px">Расход</div>
<div class="t r" style="left:570px;top:550px;font-size:13px;color:#262626;letter-spacing:-0.05px">Конечный</div>
<div class="t r" style="left:570px;top:566px;font-size:13px;color:#262626;letter-spacing:-0.05px">остаток</div>
<div class="t r" style="left:267px;top:583px;font-size:11px;color:#262626">шт</div>
<div class="t r" style="left:268px;top:598px;font-size:13px;color:#262626;letter-spacing:-0.05px">Итого</div>
<div class="t r" style="right:1495px;top:583px;font-size:11px;color:#262626">75,000</div>
<div class="t r" style="right:1411px;top:583px;font-size:11px;color:#262626">5,000</div>
<div class="t r" style="right:1327px;top:583px;font-size:11px;color:#262626">5,000</div>
<div class="t r" style="right:1243px;top:583px;font-size:11px;color:#262626">75,000</div>
<div class="t r" style="right:1496px;top:598px;font-size:13px;color:#262626">75,000</div>
<div class="t r" style="right:1412px;top:598px;font-size:13px;color:#262626">5,000</div>
<div class="t r" style="right:1328px;top:598px;font-size:13px;color:#262626">5,000</div>
<div class="t r" style="right:1244px;top:598px;font-size:13px;color:#262626">75,000</div>
<!--REPORT-END-->
</body>
</html>
